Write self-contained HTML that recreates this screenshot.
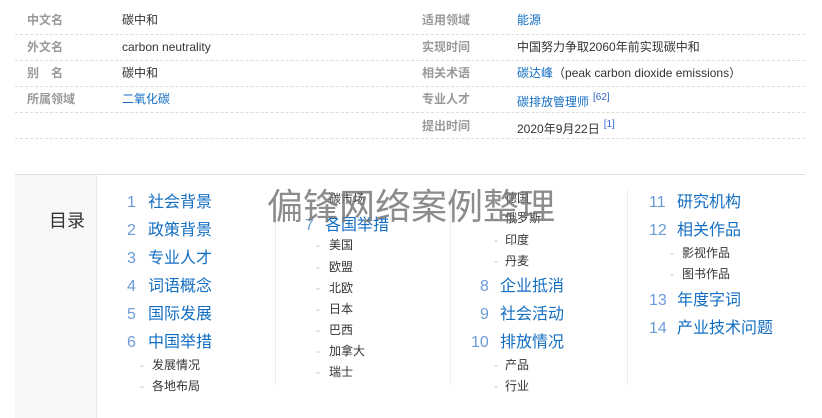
<!DOCTYPE html>
<html><head><meta charset="utf-8"><style>
*{margin:0;padding:0;box-sizing:border-box}
body{width:822px;height:418px;background:#fff;font-family:"Liberation Sans","Noto Sans CJK SC",sans-serif;position:relative;overflow:hidden;color:#333}
.a{position:absolute;white-space:nowrap;line-height:1}
.l{font-size:12px;color:#999;font-weight:bold}
.v{font-size:12px;color:#333}
.b{color:#136ec2}
.hr{position:absolute;height:0;border-top:1px dashed #ddd}
sup{font-size:10px;color:#3366cc;vertical-align:6px;margin-left:4px}
.n{font-size:16px;color:#6b9bd8}
.t{font-size:16px;color:#136ec2}
.s{font-size:12px;color:#333}
.d{font-size:12px;color:#bbb}
.vl{position:absolute;width:1px;background:#eee}
</style></head><body>
<div class="a l" style="left:27px;top:14px">中文名</div><div class="a v" style="left:122px;top:14px">碳中和</div>
<div class="a l" style="left:27px;top:41px">外文名</div><div class="a v" style="left:122px;top:41px">carbon neutrality</div>
<div class="a l" style="left:27px;top:67px">别　名</div><div class="a v" style="left:122px;top:67px">碳中和</div>
<div class="a l" style="left:27px;top:93px">所属领域</div><div class="a v b" style="left:122px;top:93px">二氧化碳</div>
<div class="a l" style="left:422px;top:14px">适用领域</div><div class="a v b" style="left:517px;top:14px">能源</div>
<div class="a l" style="left:422px;top:41px">实现时间</div><div class="a v" style="left:517px;top:41px">中国努力争取2060年前实现碳中和</div>
<div class="a l" style="left:422px;top:67px">相关术语</div><div class="a v" style="left:517px;top:67px"><span class="b">碳达峰</span>（peak carbon dioxide emissions）</div>
<div class="a l" style="left:422px;top:93px">专业人才</div><div class="a v" style="left:517px;top:93px"><span class="b">碳排放管理师</span><sup>[62]</sup></div>
<div class="a l" style="left:422px;top:120px">提出时间</div><div class="a v" style="left:517px;top:120px">2020年9月22日<sup>[1]</sup></div>
<div class="hr" style="left:15px;width:394px;top:34px"></div><div class="hr" style="left:15px;width:394px;top:60px"></div><div class="hr" style="left:15px;width:394px;top:86px"></div><div class="hr" style="left:15px;width:394px;top:112px"></div><div class="hr" style="left:15px;width:394px;top:138px"></div>
<div class="hr" style="left:411px;width:394px;top:34px"></div><div class="hr" style="left:411px;width:394px;top:60px"></div><div class="hr" style="left:411px;width:394px;top:86px"></div><div class="hr" style="left:411px;width:394px;top:112px"></div><div class="hr" style="left:411px;width:394px;top:138px"></div>

<div style="position:absolute;left:15px;top:174px;width:790px;border-top:1px solid #e0e0e0"></div>
<div style="position:absolute;left:15px;top:175px;width:82px;height:243px;background:#f8f8f8;border-right:1px solid #e8e8e8"></div>
<div class="a" style="left:49px;top:212px;font-size:18px;color:#333">目录</div>
<div class="vl" style="left:275px;top:190px;height:195px"></div>
<div class="vl" style="left:450px;top:190px;height:195px"></div>
<div class="vl" style="left:627px;top:190px;height:195px"></div>

<div class="a n" style="left:127px;top:195px">1</div><div class="a t" style="left:148px;top:195px">社会背景</div>
<div class="a n" style="left:127px;top:223px">2</div><div class="a t" style="left:148px;top:223px">政策背景</div>
<div class="a n" style="left:127px;top:251px">3</div><div class="a t" style="left:148px;top:251px">专业人才</div>
<div class="a n" style="left:127px;top:279px">4</div><div class="a t" style="left:148px;top:279px">词语概念</div>
<div class="a n" style="left:127px;top:307px">5</div><div class="a t" style="left:148px;top:307px">国际发展</div>
<div class="a n" style="left:127px;top:335px">6</div><div class="a t" style="left:148px;top:335px">中国举措</div>
<div class="a d" style="left:140px;top:359px">-</div><div class="a s" style="left:152px;top:359px">发展情况</div>
<div class="a d" style="left:140px;top:380px">-</div><div class="a s" style="left:152px;top:380px">各地布局</div>

<div class="a d" style="left:316px;top:193px">-</div><div class="a s" style="left:329px;top:193px">碳市场</div>
<div class="a n" style="left:305px;top:218px">7</div><div class="a t" style="left:325px;top:218px">各国举措</div>
<div class="a d" style="left:316px;top:239px">-</div><div class="a s" style="left:329px;top:239px">美国</div>
<div class="a d" style="left:316px;top:261px">-</div><div class="a s" style="left:329px;top:261px">欧盟</div>
<div class="a d" style="left:316px;top:282px">-</div><div class="a s" style="left:329px;top:282px">北欧</div>
<div class="a d" style="left:316px;top:303px">-</div><div class="a s" style="left:329px;top:303px">日本</div>
<div class="a d" style="left:316px;top:324px">-</div><div class="a s" style="left:329px;top:324px">巴西</div>
<div class="a d" style="left:316px;top:345px">-</div><div class="a s" style="left:329px;top:345px">加拿大</div>
<div class="a d" style="left:316px;top:366px">-</div><div class="a s" style="left:329px;top:366px">瑞士</div>

<div class="a d" style="left:494px;top:192px">-</div><div class="a s" style="left:505px;top:192px">德国</div>
<div class="a d" style="left:494px;top:212px">-</div><div class="a s" style="left:505px;top:212px">俄罗斯</div>
<div class="a d" style="left:494px;top:234px">-</div><div class="a s" style="left:505px;top:234px">印度</div>
<div class="a d" style="left:494px;top:255px">-</div><div class="a s" style="left:505px;top:255px">丹麦</div>
<div class="a n" style="left:480px;top:279px">8</div><div class="a t" style="left:500px;top:279px">企业抵消</div>
<div class="a n" style="left:480px;top:307px">9</div><div class="a t" style="left:500px;top:307px">社会活动</div>
<div class="a n" style="left:471px;top:335px">10</div><div class="a t" style="left:500px;top:335px">排放情况</div>
<div class="a d" style="left:494px;top:359px">-</div><div class="a s" style="left:505px;top:359px">产品</div>
<div class="a d" style="left:494px;top:380px">-</div><div class="a s" style="left:505px;top:380px">行业</div>

<div class="a n" style="left:649px;top:195px">11</div><div class="a t" style="left:677px;top:195px">研究机构</div>
<div class="a n" style="left:649px;top:223px">12</div><div class="a t" style="left:677px;top:223px">相关作品</div>
<div class="a d" style="left:670px;top:247px">-</div><div class="a s" style="left:682px;top:247px">影视作品</div>
<div class="a d" style="left:670px;top:268px">-</div><div class="a s" style="left:682px;top:268px">图书作品</div>
<div class="a n" style="left:649px;top:293px">13</div><div class="a t" style="left:677px;top:293px">年度字词</div>
<div class="a n" style="left:649px;top:321px">14</div><div class="a t" style="left:677px;top:321px">产业技术问题</div>

<div class="a" style="left:267px;top:189px;font-size:36px;color:rgba(120,120,120,0.85)">偏锋网络案例整理</div>
</body></html>
